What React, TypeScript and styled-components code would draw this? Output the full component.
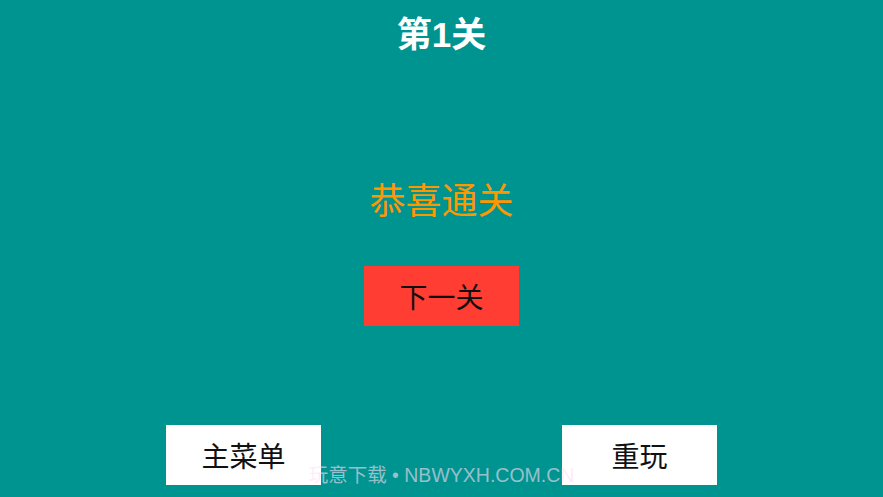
import React from "react";
import styled, { createGlobalStyle } from "styled-components";

const GlobalStyle = createGlobalStyle`
  html, body {
    margin: 0;
    padding: 0;
    height: 100%;
  }
  body {
    background: #009490;
    font-family: "Liberation Sans", "Noto Sans CJK SC", sans-serif;
    overflow: hidden;
  }
`;

const Screen = styled.div`
  position: relative;
  height: 100vh;
  display: flex;
  flex-direction: column;
  align-items: center;
  background: #009490;
`;

const LevelTitle = styled.h1`
  margin: 15px 0 0 0;
  font-size: 35px;
  line-height: 40px;
  font-weight: 700;
  color: #ffffff;
`;

const Message = styled.p`
  margin: 125px 0 0 0;
  font-size: 36px;
  line-height: 44px;
  color: #ff9800;
`;

const ActionButton = styled.button<{ $variant: "primary" | "plain" }>`
  width: 155px;
  height: 60px;
  border: none;
  border-radius: 0;
  padding: 0;
  font-family: inherit;
  font-size: 28px;
  color: #111111;
  cursor: pointer;
  background: ${(props) => (props.$variant === "primary" ? "#ff3d33" : "#ffffff")};
`;

const NextButton = styled(ActionButton)`
  margin-top: 42px;
`;

const BottomBar = styled.div`
  margin-top: auto;
  width: 100%;
  box-sizing: border-box;
  padding: 0 166px 12px 166px;
  display: flex;
  justify-content: space-between;
`;

const Watermark = styled.div`
  position: absolute;
  left: 0;
  right: 0;
  bottom: 10px;
  text-align: center;
  font-size: 19.5px;
  line-height: 24px;
  color: rgba(255, 222, 246, 0.6);
  pointer-events: none;
`;

export default function App() {
  return (
    <>
      <GlobalStyle />
      <Screen>
        <LevelTitle>第1关</LevelTitle>
        <Message>恭喜通关</Message>
        <NextButton $variant="primary">下一关</NextButton>
        <BottomBar>
          <ActionButton $variant="plain">主菜单</ActionButton>
          <ActionButton $variant="plain">重玩</ActionButton>
        </BottomBar>
        <Watermark>玩意下载 • NBWYXH.COM.CN</Watermark>
      </Screen>
    </>
  );
}
